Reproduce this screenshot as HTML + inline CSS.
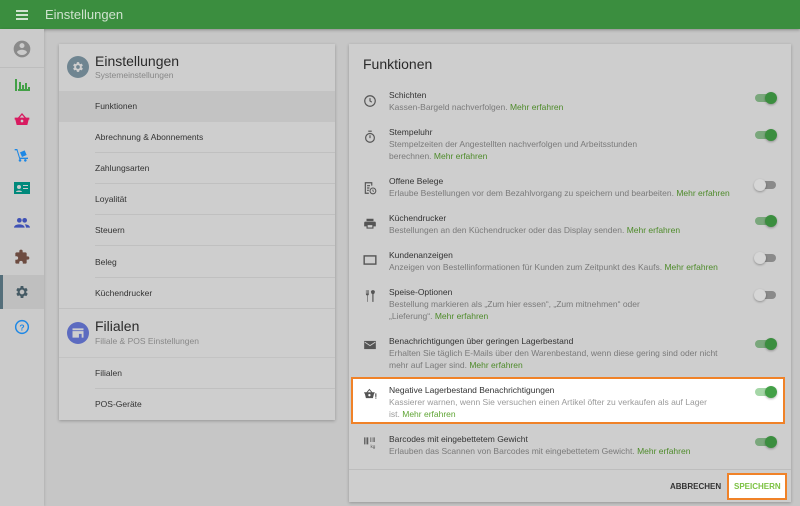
<!DOCTYPE html>
<html><head><meta charset="utf-8"><style>
*{margin:0;padding:0;box-sizing:border-box}
body{width:800px;height:506px;overflow:hidden;background:#c6c6c6;font-family:"Liberation Sans",sans-serif;position:relative;color:#2a2a2a}
.top{position:absolute;left:0;top:0;width:800px;height:29px;background:#3b8e3f;color:#cfe3cf;font-size:13px;box-shadow:0 1px 3px rgba(0,0,0,.3)}
.side{position:absolute;left:0;top:29px;width:44px;height:477px;background:#cbcbcb;box-shadow:1px 0 2px rgba(0,0,0,.1)}
.ic{position:absolute;left:14px}
.card{position:absolute;background:#cecece;box-shadow:0 1px 3px rgba(0,0,0,.25)}
.row{position:absolute;left:36px;right:0;height:31px;border-bottom:1px solid #c0c0c0;font-size:8.5px;line-height:31px;color:#333}
.it{position:absolute;left:40px;right:20px;font-size:8.5px;line-height:12px;color:#7a7a7a}
.it b{display:block;font-weight:normal;color:#333}
.it i{font-style:normal;color:#4e8b2a}
.tg{position:absolute;right:14px;width:23px;height:10px}
.tg .tr{position:absolute;left:1px;top:1px;width:21px;height:8px;border-radius:4px;background:#7aa77c}
.tg .th{position:absolute;right:0;top:-1px;width:12px;height:12px;border-radius:6px;background:#3b8e3f;box-shadow:0 1px 2px rgba(0,0,0,.3)}
.tg.off .tr{background:#8a8a8a}
.tg.off .th{left:0;right:auto;background:#d6d6d6}
.ri{position:absolute;left:14px;width:14px;height:14px}
.hb{position:absolute;left:16px;width:12px;height:2px;background:#cfe3cf}
</style></head><body>
<div class="top"><span class="hb" style="top:10px"></span><span class="hb" style="top:14px"></span><span class="hb" style="top:18px"></span><span style="position:absolute;left:45px;top:7px">Einstellungen</span></div>
<div class="side">
<svg class="ic" style="left:12px;top:10px" width="20" height="20" viewBox="0 0 24 24"><path fill="#8a8a8a" d="M12 2a10 10 0 100 20 10 10 0 000-20zm0 3a3 3 0 110 6 3 3 0 010-6zm0 14.2a7.2 7.2 0 01-6-3.2c0-2 4-3.1 6-3.1s6 1.1 6 3.1a7.2 7.2 0 01-6 3.2z"/></svg>
<div style="position:absolute;left:0;top:38px;width:44px;height:1px;background:#bdbdbd"></div>
<svg class="ic" style="top:49px" width="16" height="14" viewBox="0 0 16 14"><path fill="#43a047" d="M1 1h2v12H1zM4 13h12v-2H4zM5 4h2v7H5zM8 7h2v4H8zM11 5h2v6h-2zM14 9h2v2h-2z"/></svg>
<svg class="ic" style="top:83px" width="16" height="14" viewBox="0 0 24 20"><path fill="#d81b60" d="M12 1L6 8H1v3h1l2 8h16l2-8h1V8h-5zM12 4l3.5 4h-7zM12 11a2 2 0 110 4 2 2 0 010-4z"/></svg>
<svg class="ic" style="top:118px" width="16" height="16" viewBox="0 0 24 24"><path fill="#1e88e5" d="M1 3h4l4 13h12v2H8L4 5H1zM9 8l7-3 3 7-7 3zM11 20a2 2 0 100 .1zM19 20a2 2 0 100 .1z"/></svg>
<svg class="ic" style="top:153px" width="16" height="12" viewBox="0 0 16 12"><rect width="16" height="12" fill="#00897b"/><circle cx="5" cy="5" r="2" fill="#cbcbcb"/><path fill="#cbcbcb" d="M2 10c0-2 6-2 6 0zM9 3h5v1H9zM9 6h5v1H9z"/></svg>
<svg class="ic" style="top:188px" width="16" height="12" viewBox="0 0 24 16"><circle cx="8" cy="4" r="3.5" fill="#3f51b5"/><circle cx="16" cy="4" r="3.5" fill="#3f51b5"/><path fill="#3f51b5" d="M0 15c0-4 5-5 8-5s8 1 8 5zM16 10c3 0 8 1 8 5h-6c0-2-1-4-2-5z"/></svg>
<svg class="ic" style="top:220px" width="16" height="16" viewBox="0 0 24 24"><path fill="#6d4c41" d="M20.5 11H19V7a2 2 0 00-2-2h-4V3.5a2.5 2.5 0 00-5 0V5H4a2 2 0 00-2 2v3.8h1.5a2.7 2.7 0 010 5.4H2V20a2 2 0 002 2h3.8v-1.5a2.7 2.7 0 015.4 0V22H17a2 2 0 002-2v-4h1.5a2.5 2.5 0 000-5z"/></svg>
<div style="position:absolute;left:0;top:246px;width:44px;height:34px;background:#bfbfbf;border-left:3px solid #546e7a"></div>
<svg class="ic" style="top:255px" width="16" height="16" viewBox="0 0 24 24"><path fill="#455a64" d="M19.4 13a7.5 7.5 0 000-2l2.1-1.6-2-3.5-2.5 1a7 7 0 00-1.7-1L15 3h-4l-.4 2.8a7 7 0 00-1.7 1l-2.5-1-2 3.5L6.6 11a7.5 7.5 0 000 2l-2.1 1.6 2 3.5 2.5-1a7 7 0 001.7 1L11 21h4l.4-2.8a7 7 0 001.7-1l2.5 1 2-3.5zM13 15.5a3.5 3.5 0 110-7 3.5 3.5 0 010 7z" transform="translate(-1 0)"/></svg>
<svg class="ic" style="top:290px" width="16" height="16" viewBox="0 0 24 24"><circle cx="12" cy="12" r="9.5" fill="none" stroke="#1e88e5" stroke-width="2.2"/><text x="12" y="17" font-size="13" font-weight="bold" text-anchor="middle" fill="#1e88e5" font-family="Liberation Sans">?</text></svg>
</div>

<div class="card" style="left:59px;top:44px;width:276px;height:376px">
<svg style="position:absolute;left:8px;top:12px" width="22" height="22" viewBox="0 0 24 24"><circle cx="12" cy="12" r="12" fill="#6f8591"/><path fill="#cecece" d="M16.8 12.6a5 5 0 000-1.2l1.3-1-1.2-2.1-1.5.6a5 5 0 00-1.1-.6L14 6.7h-2.4l-.3 1.6a5 5 0 00-1 .6l-1.6-.6-1.2 2.1 1.3 1a5 5 0 000 1.2l-1.3 1 1.2 2.1 1.6-.6a5 5 0 001 .6l.3 1.6H14l.3-1.6a5 5 0 001-.6l1.6.6 1.2-2.1zM12.8 14a2 2 0 110-4 2 2 0 010 4z" transform="translate(-0.8 0)"/></svg>
<div style="position:absolute;left:36px;top:9px;font-size:14px;color:#2a2a2a">Einstellungen</div>
<div style="position:absolute;left:36px;top:26px;font-size:8.5px;color:#888">Systemeinstellungen</div>
<div style="position:absolute;left:0;top:47px;width:276px;height:31px;background:#c3c3c3"></div>
<div class="row" style="top:47px;border:none">Funktionen</div>
<div class="row" style="top:78px">Abrechnung &amp; Abonnements</div>
<div class="row" style="top:109px">Zahlungsarten</div>
<div class="row" style="top:140px">Loyalität</div>
<div class="row" style="top:171px">Steuern</div>
<div class="row" style="top:203px">Beleg</div>
<div class="row" style="top:234px;left:0;padding-left:36px">Küchendrucker</div>
<svg style="position:absolute;left:8px;top:278px" width="22" height="22" viewBox="0 0 24 24"><circle cx="12" cy="12" r="12" fill="#5c6bc0"/><path fill="#cecece" d="M6 7h12v2H6zM6 10h12v7h-2v-4h-3v4H6zM8 13h3v2H8z"/></svg>
<div style="position:absolute;left:36px;top:274px;font-size:14px;color:#2a2a2a">Filialen</div>
<div style="position:absolute;left:36px;top:292px;font-size:8.5px;color:#888">Filiale &amp; POS Einstellungen</div>
<div style="position:absolute;left:0;top:313px;width:276px;height:1px;background:#c3c3c3"></div>
<div class="row" style="top:314px">Filialen</div>
<div class="row" style="top:345px;border:none">POS-Geräte</div>
</div>

<div class="card" style="left:349px;top:44px;width:442px;height:458px">
<div style="position:absolute;left:14px;top:12px;font-size:14px;color:#2a2a2a">Funktionen</div>
<div style="position:absolute;left:2px;top:333px;width:434px;height:47px;background:#fff;border:2.5px solid #f08228"></div>

<svg class="ri" style="top:50px" viewBox="0 0 24 24"><circle cx="12" cy="12" r="9" fill="none" stroke="#555" stroke-width="2"/><path d="M12 7v5l3 2" fill="none" stroke="#555" stroke-width="2"/></svg>
<div class="it" style="top:45px"><b>Schichten</b>Kassen-Bargeld nachverfolgen. <i>Mehr erfahren</i></div>
<div class="tg" style="top:49px"><div class="tr"></div><div class="th"></div></div>

<svg class="ri" style="top:86px" viewBox="0 0 24 24"><circle cx="12" cy="13.5" r="7.5" fill="none" stroke="#555" stroke-width="2"/><path d="M9 2h6M12 9v5" stroke="#555" stroke-width="2"/></svg>
<div class="it" style="top:82px"><b>Stempeluhr</b>Stempelzeiten der Angestellten nachverfolgen und Arbeitsstunden<br>berechnen. <i>Mehr erfahren</i></div>
<div class="tg" style="top:86px"><div class="tr"></div><div class="th"></div></div>

<svg class="ri" style="top:137px" viewBox="0 0 24 24"><path fill="#555" d="M3 2h13v6h-2V4H5v16h5v2H3zM7 7h5v2H7zM7 11h4v2H7zM7 15h3v2H7z"/><circle cx="17" cy="17" r="5" fill="none" stroke="#555" stroke-width="1.8"/><path d="M17 14.5V17l1.5 1" fill="none" stroke="#555" stroke-width="1.5"/></svg>
<div class="it" style="top:131px"><b>Offene Belege</b>Erlaube Bestellungen vor dem Bezahlvorgang zu speichern und bearbeiten. <i>Mehr erfahren</i></div>
<div class="tg off" style="top:136px"><div class="tr"></div><div class="th"></div></div>

<svg class="ri" style="top:173px" viewBox="0 0 24 24"><path fill="#555" d="M6 3h12v4H6zM4 8h16a2 2 0 012 2v6h-4v4H6v-4H2v-6a2 2 0 012-2zM8 14v4h8v-4z"/></svg>
<div class="it" style="top:168px"><b>Küchendrucker</b>Bestellungen an den Küchendrucker oder das Display senden. <i>Mehr erfahren</i></div>
<div class="tg" style="top:172px"><div class="tr"></div><div class="th"></div></div>

<svg class="ri" style="top:209px" viewBox="0 0 24 24"><rect x="2" y="5" width="20" height="14" fill="none" stroke="#555" stroke-width="2.4"/></svg>
<div class="it" style="top:205px"><b>Kundenanzeigen</b>Anzeigen von Bestellinformationen für Kunden zum Zeitpunkt des Kaufs. <i>Mehr erfahren</i></div>
<div class="tg off" style="top:209px"><div class="tr"></div><div class="th"></div></div>

<svg class="ri" style="top:245px" viewBox="0 0 24 24"><path fill="#555" d="M5 2h1v6h1V2h1v6h1V2h1v7a2 2 0 01-2 2v11H7V11a2 2 0 01-2-2zM17 2a3 3 0 013 4.5 3 3 0 01-2 2.3V22h-2V8.8a3 3 0 01-2-2.3A3 3 0 0117 2z"/></svg>
<div class="it" style="top:242px"><b>Speise-Optionen</b>Bestellung markieren als „Zum hier essen“, „Zum mitnehmen“ oder<br>„Lieferung“. <i>Mehr erfahren</i></div>
<div class="tg off" style="top:246px"><div class="tr"></div><div class="th"></div></div>

<svg class="ri" style="top:294px" viewBox="0 0 24 24"><path fill="#555" d="M2 5h20v14H2z"/><path d="M3 7l9 6 9-6" fill="none" stroke="#cecece" stroke-width="1.6"/></svg>
<div class="it" style="top:291px"><b>Benachrichtigungen über geringen Lagerbestand</b>Erhalten Sie täglich E-Mails über den Warenbestand, wenn diese gering sind oder nicht<br>mehr auf Lager sind. <i>Mehr erfahren</i></div>
<div class="tg" style="top:295px"><div class="tr"></div><div class="th"></div></div>

<svg class="ri" style="top:343px" viewBox="0 0 24 24"><path fill="#555" d="M11 3L6 9H2v2h1l2 8h12l2-8h1V9h-4zM11 5.5L14 9H8zM11 12a2 2 0 110 4 2 2 0 010-4zM21 11h2v6h-2zM21 18h2v2h-2z"/></svg>
<div class="it" style="top:340px"><b>Negative Lagerbestand Benachrichtigungen</b><span style="color:#9a9a9a">Kassierer warnen, wenn Sie versuchen einen Artikel öfter zu verkaufen als auf Lager<br>ist. </span><i style="color:#5fa534">Mehr erfahren</i></div>
<div class="tg" style="top:343px"><div class="tr" style="background:#a5d6a7"></div><div class="th" style="background:#43a047"></div></div>

<svg class="ri" style="top:391px" viewBox="0 0 24 24"><path fill="#555" d="M2 4h2v12H2zM5 4h1v12H5zM7 4h2v12H7zM12 4h1v8h-1zM15 4h1v8h-1zM18 4h2v8h-2z"/><text x="17" y="22" font-size="8" text-anchor="middle" fill="#555" font-family="Liberation Sans">kg</text></svg>
<div class="it" style="top:389px"><b>Barcodes mit eingebettetem Gewicht</b>Erlauben das Scannen von Barcodes mit eingebettetem Gewicht. <i>Mehr erfahren</i></div>
<div class="tg" style="top:393px"><div class="tr"></div><div class="th"></div></div>

<div style="position:absolute;left:0;top:425px;width:442px;height:1px;background:#bdbdbd"></div>
<div style="position:absolute;left:321px;top:438px;font-size:8px;font-weight:bold;color:#333">ABBRECHEN</div>
<div style="position:absolute;left:378px;top:429px;width:60px;height:27px;background:#fff;border:2.5px solid #f08228"></div>
<div style="position:absolute;left:385px;top:438px;font-size:8px;font-weight:bold;color:#7cc242">SPEICHERN</div>
</div>
</body></html>
